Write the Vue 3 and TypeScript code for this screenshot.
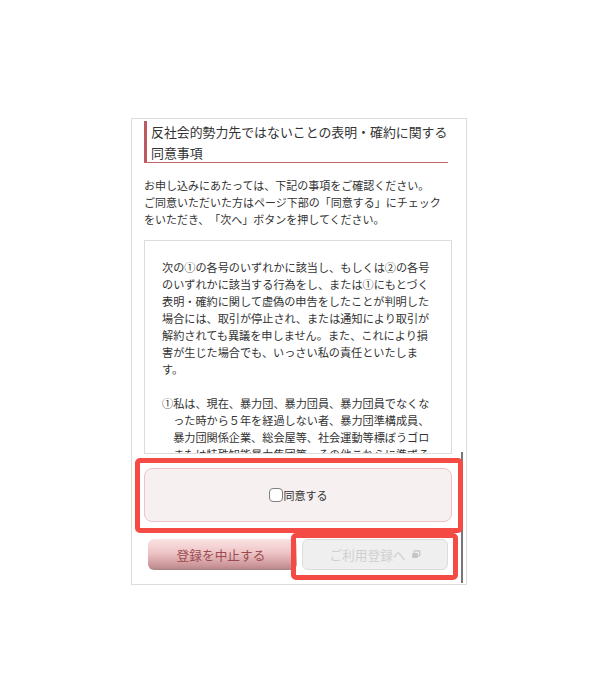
<script setup lang="ts">
const clause = [
  '①私は、現在、暴力団、暴力団員、暴力団員でなくなった時から５年を経過しない者、暴力団準構成員、暴力団関係企業、総会屋等、社会運動等標ぼうゴロまたは特殊知能暴力集団等、その他これらに準ずる者に該当しないことを表明します。'
]
</script>

<template>
  <div class="page">
    <div class="frame">
      <h1 class="title">反社会的勢力先ではないことの表明・確約に関する同意事項</h1>
      <p class="intro">お申し込みにあたっては、下記の事項をご確認ください。<br />ご同意いただいた方はページ下部の「同意する」にチェックをいただき、「次へ」ボタンを押してください。</p>
      <div class="terms">
        <p class="lead">次の①の各号のいずれかに該当し、もしくは②の各号のいずれかに該当する行為をし、または①にもとづく表明・確約に関して虚偽の申告をしたことが判明した場合には、取引が停止され、または通知により取引が解約されても異議を申しません。また、これにより損害が生じた場合でも、いっさい私の責任といたします。</p>
        <p v-for="c in clause" :key="c" class="clause">{{ c }}</p>
      </div>
      <label class="agree"><span class="check"></span><span>同意する</span></label>
      <div class="actions">
        <button class="btn cancel" type="button">登録を中止する</button>
        <button class="btn next" type="button" disabled>
          ご利用登録へ
          <svg class="ext" viewBox="0 0 10 10" width="10" height="9" aria-hidden="true">
            <rect x="3" y="1" width="6.2" height="5.6" rx="0.8" fill="none" stroke="#c4c4c4" stroke-width="1.3" />
            <rect x="0.8" y="3.2" width="6.2" height="5.8" rx="0.8" fill="#c4c4c4" />
          </svg>
        </button>
      </div>
      <div class="scrollbar"></div>
      <div class="mark mark-agree"></div>
      <div class="mark mark-next"></div>
    </div>
  </div>
</template>

<style scoped>
.page {
  width: 600px;
  height: 700px;
  padding: 118px 0 0 131px;
  box-sizing: border-box;
  background: #fff;
  font-family: "Noto Sans CJK JP", "Liberation Sans", sans-serif;
  color: #333;
  text-spacing-trim: space-all;
  line-break: loose;
}
.frame {
  position: relative;
  width: 336px;
  height: 467px;
  box-sizing: border-box;
  border: 1px solid #dcdcdc;
  padding: 2px 14px 0 12px;
}
.title {
  margin: 0;
  width: 304px;
  height: 42px;
  box-sizing: border-box;
  border-left: 3px solid #bb5a60;
  border-bottom: 1px solid #c0666c;
  padding-left: 4px;
  font-size: 12.9px;
  line-height: 21px;
  font-weight: 400;
  color: #333;
}
.intro {
  margin: 14px 0 0;
  width: 304px;
  font-size: 11px;
  line-height: 17px;
}
.terms {
  margin-top: 12px;
  width: 308px;
  height: 214px;
  box-sizing: border-box;
  border: 1px solid #dcdcdc;
  padding: 18px 16px 0 17px;
  overflow: hidden;
  font-size: 11.15px;
  line-height: 17px;
}
.terms p {
  margin: 0;
}
.lead {
  margin-bottom: 17px !important;
}
.clause {
  padding-left: 11.15px;
  text-indent: -11.15px;
}
.agree {
  margin-top: 14px;
  width: 308px;
  height: 54px;
  box-sizing: border-box;
  display: flex;
  align-items: center;
  justify-content: center;
  border: 1.5px solid #ecc4c9;
  border-radius: 8px;
  background: #f6f0f0;
  font-size: 11px;
}
.check {
  width: 14px;
  height: 14px;
  box-sizing: border-box;
  border: 1.5px solid #808080;
  border-radius: 4px;
  background: #fff;
  margin-right: 1px;
}
.actions {
  margin-top: 17px;
  display: flex;
  gap: 5px;
  padding-left: 4px;
}
.btn {
  height: 31px;
  padding: 0;
  font-family: inherit;
  border-radius: 6px;
  display: flex;
  align-items: center;
  justify-content: center;
}
.cancel {
  width: 149px;
  border: 0;
  background: linear-gradient(#fbe3e4 0%, #eec4c6 45%, #c99396 88%, #a98487 100%);
  color: #9b4b50;
  font-size: 12.7px;
  padding-right: 3px;
}
.next {
  width: 146px;
  border: 1px solid #dcdcdc;
  background: #efefef;
  color: #cfcfcf;
  font-size: 12.7px;
}
.ext {
  margin-left: 5px;
}
.scrollbar {
  position: absolute;
  left: 329px;
  top: 333px;
  width: 2px;
  height: 131px;
  background: #777;
}
.mark {
  position: absolute;
  box-sizing: border-box;
  border: 5px solid #f44c45;
  border-radius: 5px;
}
.mark-agree {
  left: 3px;
  top: 339px;
  width: 328px;
  height: 75px;
}
.mark-next {
  left: 159px;
  top: 414px;
  width: 167px;
  height: 47px;
}
</style>
